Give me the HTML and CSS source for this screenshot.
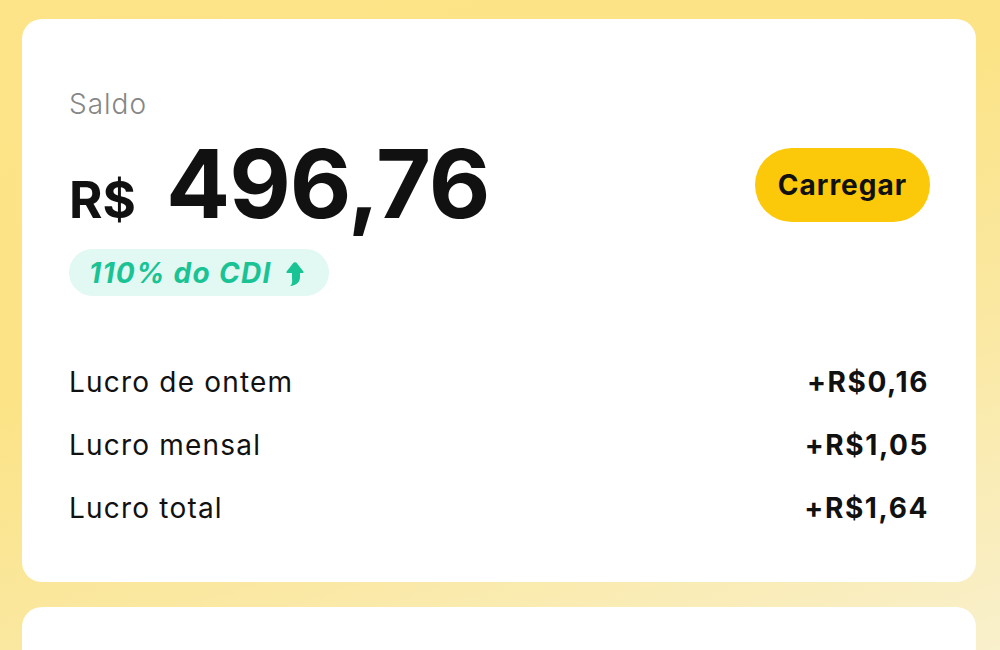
FILE: index.html
```html
<!DOCTYPE html>
<html lang="pt-BR">
<head>
<meta charset="utf-8">
<link rel="stylesheet" href="styles.css">
</head>
<body>
<main class="page">
  <section class="card">
    <div class="label">Saldo</div>
    <div class="balance-row">
      <div class="balance">
        <span class="currency">R$</span>
        <span class="amount">496,76</span>
      </div>
      <button class="btn">Carregar</button>
    </div>
    <div class="badge">
      <span>110% do CDI</span>
      <svg class="arrow" viewBox="0 0 18 24" width="18" height="24" aria-hidden="true">
        <path d="M9 0.4 Q9.8 0 10.5 0.8 L17.4 9.4 Q18.2 11 16.6 11 L14 11 L14 15 C14 20 10.5 23.5 4 24 C7 22 6 19 6 15 L6 11 L1.4 11 Q-0.2 11 0.6 9.4 L7.5 0.8 Q8.2 0 9 0.4 Z" fill="#19c394"/>
      </svg>
    </div>
    <div class="rows">
      <div class="row"><span>Lucro de ontem</span><span class="val">+R$0,16</span></div>
      <div class="row"><span>Lucro mensal</span><span class="val">+R$1,05</span></div>
      <div class="row"><span>Lucro total</span><span class="val">+R$1,64</span></div>
    </div>
  </section>
  <section class="card card-next"></section>
</main>
</body>
</html>
```
FILE: styles.css
```css
* { box-sizing: border-box; }
html, body { margin: 0; height: 100%; }
body {
  font-family: Inter, "Noto Sans", "Liberation Sans", sans-serif;
  color: #111;
  background: linear-gradient(160deg, #fde488 0%, #fbe386 40%, #fae9a6 70%, #f9f0cc 100%);
  overflow: hidden;
}
.page {
  padding: 19px 24px 0 22px;
  display: flex;
  flex-direction: column;
  gap: 25px;
}
.card {
  background: #fff;
  border-radius: 20px;
  padding: 68px 46px 55px 47px;
}
.label {
  font-size: 28px;
  line-height: 34px;
  font-weight: 300;
  letter-spacing: 1px;
  color: #868686;
}
.balance-row {
  display: flex;
  align-items: center;
  justify-content: space-between;
  margin-top: 18px;
}
.balance {
  display: flex;
  align-items: baseline;
  gap: 30px;
  font-weight: 700;
}
.currency { font-size: 51px; line-height: 60px; }
.amount { font-size: 95px; line-height: 90px; letter-spacing: -1px; }
.btn {
  font-family: inherit;
  border: 0;
  background: #fcc80a;
  color: #111;
  font-weight: 700;
  font-size: 28px;
  letter-spacing: 1px;
  height: 74px;
  width: 175px;
  border-radius: 37px;
  padding: 0;
}
.badge {
  display: inline-flex;
  align-items: center;
  gap: 14px;
  margin-top: 19px;
  height: 47px;
  padding: 0 25px 0 20px;
  border-radius: 24px;
  background: #e2f8f2;
  color: #19c394;
  font-style: italic;
  font-weight: 700;
  font-size: 28px;
  letter-spacing: 1.3px;
}
.arrow { display: block; margin-top: 2px; }
.rows {
  margin-top: 67px;
  display: flex;
  flex-direction: column;
  gap: 25px;
}
.row {
  display: flex;
  justify-content: space-between;
  align-items: baseline;
  font-size: 28px;
  line-height: 38px;
  letter-spacing: 1.2px;
}
.val { font-weight: 700; font-size: 28px; letter-spacing: 1.6px; margin-right: 1px; }
.card-next { height: 200px; padding: 0; }
```
